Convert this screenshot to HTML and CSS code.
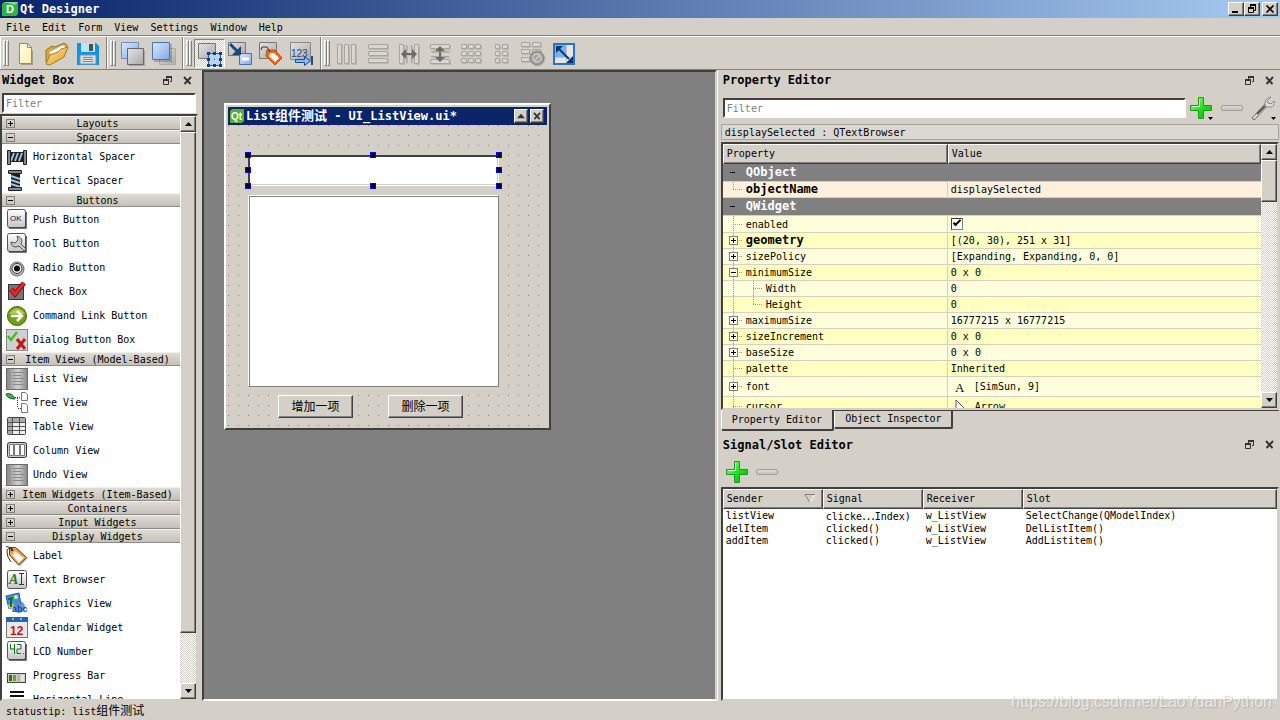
FILE: index.html
```html
<!doctype html>
<html lang="en">
<head>
	<meta charset="utf-8">
	<meta name="viewport" content="width=device-width, initial-scale=1">
	<title>Qt Designer</title>
	<link rel="stylesheet" href="styles.css">
</head>
<body>

	<!-- Shared shapes -->
	<svg class="defs" aria-hidden="true">
		<defs>
			<linearGradient id="g-blue" x1="0" y1="0" x2="1" y2="1"><stop offset="0" stop-color="#dbe9fb"/><stop offset="1" stop-color="#7fabe8"/></linearGradient>
			<linearGradient id="g-gray" x1="0" y1="0" x2="1" y2="1"><stop offset="0" stop-color="#e4e4e4"/><stop offset="1" stop-color="#a9a9a9"/></linearGradient>
			<linearGradient id="g-key" x1="0" y1="0" x2="0" y2="1"><stop offset="0" stop-color="#fff"/><stop offset="1" stop-color="#c4c4c4"/></linearGradient>
			<linearGradient id="g-green" x1="0" y1="0" x2="1" y2="1"><stop offset="0" stop-color="#9dff8a"/><stop offset=".55" stop-color="#1fdc1f"/><stop offset="1" stop-color="#08b008"/></linearGradient>
			<linearGradient id="g-list" x1="0" y1="0" x2="1" y2="0"><stop offset="0" stop-color="#858585"/><stop offset=".55" stop-color="#d2d2d2"/><stop offset="1" stop-color="#858585"/></linearGradient>
			<linearGradient id="g-folder" x1="0" y1="0" x2="1" y2="1"><stop offset="0" stop-color="#ffe99a"/><stop offset="1" stop-color="#d99a20"/></linearGradient>
			<linearGradient id="g-page" x1="0" y1="0" x2="1" y2="1"><stop offset="0" stop-color="#fffff0"/><stop offset="1" stop-color="#fdf0a0"/></linearGradient>
		</defs>
		<symbol id="float" viewBox="0 0 9 9"><path d="M3 1h6M0 4h6" stroke="currentColor" stroke-width="2"/><path d="M3.500 1v2M8.500 1v4.500H7M.5 4v4.500h5V4" fill="none" stroke="currentColor"/></symbol>
		<symbol id="close" viewBox="0 0 9 8"><path d="M1 .5l6.500 7M8 .5l-6.500 7" fill="none" stroke="currentColor" stroke-width="1.900"/></symbol>
		<symbol id="up" viewBox="0 0 7 4"><path d="M3.500 0L7 4H0z" fill="currentColor"/></symbol>
		<symbol id="down" viewBox="0 0 7 4"><path d="M0 0h7L3.500 4z" fill="currentColor"/></symbol>
		<symbol id="plus" viewBox="0 0 22 22"><path d="M8.500 .5h5v8h8v5h-8v8h-5v-8h-8v-5h8z" fill="url(#g-green)" stroke="#14a014"/><path d="M9.500 2v7.500H2" fill="none" stroke="#d4ffcc"/></symbol>
		<symbol id="minus" viewBox="0 0 22 6"><rect x=".5" y=".5" width="21" height="5" rx="1" fill="#c9c6c0" stroke="#a3a09b"/><path d="M2 2h18" stroke="#e4e2dd"/></symbol>
		<symbol id="tag" viewBox="0 0 24 24"><path d="M6 5l6-1 11 10-8 8L5 11z" opacity=".3"/><path d="M4.500 3.500h6l11 10-8 7.500-9-10z" fill="#f0a04c" stroke="#6e431a"/><path d="M10 7l9 7-5 5-7-8z" fill="#fff" stroke="#f7c27e"/><circle cx="7" cy="6" r="1.300" fill="#333"/><path d="M8 4L1 2.500M7 5Q2 3 2 8t4 10" fill="none" stroke="#333"/></symbol>
		<symbol id="list" viewBox="0 0 24 24"><rect x="1.500" y="1.500" width="21" height="21" fill="url(#g-list)" stroke="#6c6c6c"/><path d="M4 5.500h2M4 8.500h2M4 11.500h2M4 14.500h2M4 17.500h2M8 5.500h11M8 8.500h8M8 11.500h11M8 14.500h9M8 17.500h11" stroke="#888"/></symbol>
	</svg>

	<header class="titlebar">
		<svg class="logo" viewBox="0 0 16 14"><path d="M2 0h14v12l-2 2H0V2z" fill="#2fb344"/><path d="M2 0h14l-3 3z" fill="#7adf83"/><text x="4" y="11" class="logo-text">D</text></svg>
		<h1>Qt Designer</h1>
		<div class="window-buttons">
			<button class="raised" aria-label="Minimize"><svg viewBox="0 0 12 10"><path d="M2 8h6" stroke="#000" stroke-width="2"/></svg></button>
			<button class="raised" aria-label="Restore"><svg viewBox="0 0 12 10"><path d="M4.500 1v2M9.500 1v5.500H8M2.500 4v4.500h5V4" fill="none" stroke="#000"/><path d="M4 1h6M2 4h6" stroke="#000" stroke-width="2"/></svg></button>
			<button class="raised" aria-label="Close"><svg viewBox="0 0 12 10"><path d="M2.500 1.500l7 7M9.500 1.500l-7 7" stroke="#000" stroke-width="1.700"/></svg></button>
		</div>
	</header>

	<nav class="menubar">
		<button>File</button>
		<button>Edit</button>
		<button>Form</button>
		<button>View</button>
		<button>Settings</button>
		<button>Window</button>
		<button>Help</button>
	</nav>

	<div class="toolbar">
		<div class="tools">
			<i class="grip"></i>
			<button aria-label="New"><svg viewBox="0 0 24 24"><path d="M7 4h8l4 5v14H7z" opacity=".25"/><path d="M5.500 1.500h8l4 4v16h-12z" fill="url(#g-page)" stroke="#a08a50"/><path d="M13.500 1.500v4h4z" fill="#fff" stroke="#a08a50"/></svg></button>
			<button aria-label="Open"><svg viewBox="0 0 24 24"><path d="M1 8l6-4 3 1 9-4 3 2-1 7L8 21l-7-1z" fill="#d9a63c" stroke="#a36f16"/><path d="M4 10l14-7 3 2-4 9-9 4z" fill="#fff" stroke="#bbb"/><path d="M1 22l4-9 8-3 3-3 7-2-4 10L5 23z" fill="url(#g-folder)" stroke="#b07a1a"/></svg></button>
			<button aria-label="Save"><svg viewBox="0 0 24 24"><path d="M1 1h19l3 3v19H1z" fill="#0a93f0"/><path d="M5 1h14v9H5z" fill="#bfe3f2"/><path d="M13 2h4v7h-4z" fill="#4a4f55"/><path d="M4 13h16v9H4z" fill="#dcdcdc" stroke="#8f8f8f"/><path d="M7 15.500h10M7 17.500h10M7 19.500h10" stroke="#888"/></svg></button>
		</div>
		<div class="tools">
			<i class="grip"></i>
			<button aria-label="Send to back"><svg viewBox="0 0 24 24"><path d="M.5.500h17v16H.5z" fill="url(#g-blue)" stroke="#6b91c9"/><path d="M8 8h16v16H8z" opacity=".2"/><path d="M6.500 6.500h16v16h-16z" fill="url(#g-gray)" stroke="#686868"/></svg></button>
			<button aria-label="Bring to front"><svg viewBox="0 0 24 24"><path d="M7.500 6.500h16v16h-16z" fill="url(#g-gray)" stroke="#aaa"/><path d="M2 2h18v18H2z" opacity=".2"/><path d="M.5.500h17v17H.5z" fill="url(#g-blue)" stroke="#4776b8"/></svg></button>
		</div>
		<div class="tools">
			<i class="grip"></i>
			<button class="checked" aria-label="Edit widgets" aria-pressed="true"><svg viewBox="0 0 24 24"><path d="M.5.500h17v15H.5z" fill="url(#g-gray)" stroke="#777"/><path d="M10.500 10.500h12v12h-12z" fill="#b7d3f7" stroke="#2f62a8"/><path d="M9 9h3v3H9zM15 9h3v3h-3zM21 9h3v3h-3zM9 15h3v3H9zM21 15h3v3h-3zM9 21h3v3H9zM15 21h3v3h-3zM21 21h3v3h-3z" fill="#183c70"/><path d="M16 16h1v1h-1z" fill="#234e8c"/></svg></button>
			<button aria-label="Edit signals and slots"><svg viewBox="0 0 24 24"><path d="M.5.500h17v13H.5z" fill="url(#g-gray)" stroke="#777"/><path d="M11.500 11.500h12v11h-12z" fill="url(#g-blue)" stroke="#4673ad"/><path d="M14 17h7" stroke="#fff" stroke-width="3"/><path d="M2 2l8 8" stroke="#154a7a" stroke-width="3"/><path d="M13 4v9H4z" fill="#154a7a"/></svg></button>
			<button aria-label="Edit buddies"><svg viewBox="0 0 24 24"><path d="M.5.500h17v16H.5z" fill="url(#g-gray)" stroke="#777"/><path d="M8 8h8l7 8-7 7-9-9z" fill="#f26a17" stroke="#c14808"/><path d="M11 11h4l5 5-4 4-6-6z" fill="#fff"/><path d="M3 5h5l3 5M3 5l-1 3" stroke="#333" fill="none"/></svg></button>
			<button aria-label="Edit tab order"><svg viewBox="0 0 24 24"><path d="M.5.500h20v17H.5z" fill="url(#g-gray)" stroke="#888"/><text x="1" y="15" class="tab-text">123</text><path d="M5.500 17.500h9v-3l6 4.500-6 4.500v-3h-9z" fill="#8db9f1" stroke="#164d94"/><path d="M22 14v9" stroke="#164d94" stroke-width="2"/></svg></button>
		</div>
		<div class="tools">
			<i class="grip"></i>
			<button aria-label="Lay out horizontally"><svg class="flat" viewBox="0 0 24 24"><path d="M2.500 2.500h4v19h-4zM9.500 2.500h4v19h-4zM16.500 2.500h4v19h-4z"/></svg></button>
			<button aria-label="Lay out vertically"><svg class="flat" viewBox="0 0 24 24"><path d="M2.500 2.500h19v4h-19zM2.500 9.500h19v4h-19zM2.500 16.500h19v4h-19z"/></svg></button>
			<button aria-label="Lay out in a horizontal splitter"><svg class="flat" viewBox="0 0 24 24"><path d="M2.500 2.500h4v19h-4zM17.500 2.500h4v19h-4z"/><path d="M9.500 3v18M14.500 3v18"/><path d="M4 12l5-5v4h6V7l5 5-5 5v-4H9v4z" class="ink"/></svg></button>
			<button aria-label="Lay out in a vertical splitter"><svg class="flat" viewBox="0 0 24 24"><path d="M2.500 2.500h19v4h-19zM2.500 17.500h19v4h-19z"/><path d="M3 9.500h18M3 14.500h18"/><path d="M12 4l5 5h-4v6h4l-5 5-5-5h4V9H7z" class="ink"/></svg></button>
			<button aria-label="Lay out in a grid"><svg class="flat" viewBox="0 0 24 24"><path d="M2.500 2.500h5v4h-5zM9.500 2.500h5v4h-5zM16.500 2.500h5v4h-5zM2.500 9.500h5v4h-5zM9.500 9.500h5v4h-5zM16.500 9.500h5v4h-5zM2.500 16.500h5v4h-5zM9.500 16.500h5v4h-5zM16.500 16.500h5v4h-5z"/></svg></button>
			<button aria-label="Lay out in a form"><svg class="flat" viewBox="0 0 24 24"><path d="M5.500 2.500h4v4h-4zM12.500 2.500h5v4h-5zM5.500 9.500h4v4h-4zM12.500 9.500h5v4h-5zM5.500 16.500h4v4h-4zM12.500 16.500h5v4h-5z"/></svg></button>
			<button aria-label="Break layout"><svg class="flat" viewBox="0 0 24 24"><path d="M.5.500h8v4h-8zM11.500.500h8v4h-8zM.5 7.500h8v4h-8zM11.500 7.500h8v4h-8zM.5 15.500h8v4h-8z"/><circle cx="16" cy="16" r="7" class="ban"/><circle cx="16" cy="16" r="4" class="ring"/><path d="M13 19l6-6" class="ring"/></svg></button>
			<button aria-label="Adjust size"><svg viewBox="0 0 24 24"><path d="M2 2h20v20H2z" fill="#e7e6e4" stroke="#2a72c4" stroke-width="2"/><path d="M3 3h11v12H3z" fill="#79b3ee"/><path d="M14.500 3v18M3 15.500h18" stroke="#c3c3c3"/><path d="M7 7l10 10" stroke="#063a66" stroke-width="2"/><path d="M4 4h7l-7 7zM21 21h-7l7-7z" fill="#063a66"/></svg></button>
		</div>
	</div>

	<main class="workspace">

		<section class="dock widget-box">
			<header class="dock-title">
				<h2>Widget Box</h2>
				<button aria-label="Float"><svg><use href="#float"/></svg></button>
				<button aria-label="Close"><svg><use href="#close"/></svg></button>
			</header>
			<input class="filter" type="text" placeholder="Filter" aria-label="Filter widgets">

			<div class="sunken scroll-area">
				<div class="categories">
					<button class="category"><i class="box plus"></i><span>Layouts</span></button>
					<button class="category"><i class="box"></i><span>Spacers</span></button>
					<ul>
						<li><svg viewBox="0 0 24 24"><path d="M5 7h14v10H5z" fill="#1c1c1c"/><path d="M6 16l3-8M10 16l3-8M14 16l3-8" stroke="#9cc4e0" stroke-width="2"/><path d="M2.500 5.500h3v14h-3zM18.500 5.500h3v14h-3z" fill="#888" stroke="#222"/></svg>Horizontal Spacer</li>
						<li><svg viewBox="0 0 24 24"><path d="M6 4h9v15H6z" fill="#1c1c1c"/><path d="M6 7l9 3M6 11l9 3M6 15l9 3" stroke="#9cc4e0" stroke-width="2"/><path d="M3.500 1.500h13v3h-13zM3.500 18.500h13v3h-13z" fill="#888" stroke="#222"/></svg>Vertical Spacer</li>
					</ul>
					<button class="category"><i class="box"></i><span>Buttons</span></button>
					<ul>
						<li><svg viewBox="0 0 24 24"><rect x="2.500" y="1.500" width="18" height="18" rx="2" fill="url(#g-key)" stroke="#555"/><path d="M21 4v16H4" stroke="#444" fill="none" stroke-width="1.500"/><text x="5" y="13" class="ok-text">OK</text></svg>Push Button</li>
						<li><svg viewBox="0 0 24 24"><rect x="2.500" y="1.500" width="18" height="18" rx="2" fill="url(#g-key)" stroke="#555"/><path d="M21 4v16H4" stroke="#444" fill="none" stroke-width="1.500"/><path d="M12 4l1 4-3 3-4-1q0 5 5 5l3-1 5 5 2-2-5-5q3-6-4-8z" fill="#c8c8d4" stroke="#555"/></svg>Tool Button</li>
						<li><svg viewBox="0 0 24 24"><circle cx="12" cy="13" r="7" fill="#bbb" stroke="#666"/><circle cx="12" cy="12.500" r="5" fill="#eee" stroke="#333"/><circle cx="12" cy="12.500" r="3"/></svg>Radio Button</li>
						<li><svg viewBox="0 0 24 24"><rect x="3.500" y="4.500" width="15" height="15" fill="#777" stroke="#333"/><path d="M6 9l4 5L19 3" fill="none" stroke="#841010" stroke-width="5"/><path d="M6 9l4 5L19 3" fill="none" stroke="#e82424" stroke-width="3"/></svg>Check Box</li>
						<li><svg viewBox="0 0 24 24"><circle cx="12" cy="12" r="9.500" fill="#6fa114" stroke="#3f6408"/><path d="M4 10q8-11 16 0z" fill="#a9cd50"/><path d="M6 12h10M12 7l5 5-5 5" fill="none" stroke="#fff" stroke-width="2.500"/></svg>Command Link Button</li>
						<li><svg viewBox="0 0 24 24"><rect x="1.500" y="1.500" width="21" height="21" fill="#d0d0d0" stroke="#888"/><path d="M3 8l3 4 6-8" fill="none" stroke="#42c220" stroke-width="2.500"/><path d="M12 11l8 10M20 11l-8 10" stroke="#c21919" stroke-width="3"/></svg>Dialog Button Box</li>
					</ul>
					<button class="category"><i class="box"></i><span>Item Views (Model-Based)</span></button>
					<ul>
						<li><svg><use href="#list"/></svg>List View</li>
						<li><svg viewBox="0 0 24 24"><path d="M1 3q6-2 9 5-8 0-9-5z" fill="#3db54c" stroke="#0d5e1b"/><path d="M10 6.500h5M12.500 7v10M13 17.500h3" stroke="#333" stroke-dasharray="1 1"/><path d="M16.500 1.500h4l2 2v6h-6zM16.500 12.500h4l2 2v7h-6z" fill="#fff" stroke="#777"/></svg>Tree View</li>
						<li><svg viewBox="0 0 24 24"><rect x="2.500" y="2.500" width="18" height="17" rx="1" fill="#eee" stroke="#444"/><path d="M3 3h17v4H3zM3 3h4v16H3z" fill="#aaa"/><path d="M3 7.500h18M3 11.500h18M3 15.500h18M7.500 3v17M14.500 3v17" stroke="#555"/></svg>Table View</li>
						<li><svg viewBox="0 0 24 24"><rect x="2.500" y="3.500" width="19" height="15" rx="2" fill="#ccc" stroke="#333"/><path d="M4.500 5.500h4v11h-4zM9.500 5.500h5v11h-5zM15.500 5.500h4v11h-4z" fill="#fff" stroke="#777"/></svg>Column View</li>
						<li><svg><use href="#list"/></svg>Undo View</li>
					</ul>
					<button class="category"><i class="box plus"></i><span>Item Widgets (Item-Based)</span></button>
					<button class="category"><i class="box plus"></i><span>Containers</span></button>
					<button class="category"><i class="box plus"></i><span>Input Widgets</span></button>
					<button class="category"><i class="box"></i><span>Display Widgets</span></button>
					<ul>
						<li><svg><use href="#tag"/></svg>Label</li>
						<li><svg viewBox="0 0 24 24"><rect x="2.500" y="2.500" width="19" height="18" rx="2" fill="url(#g-key)" stroke="#555"/><text x="4" y="16" class="ai-text">A</text><path d="M14 5.500h5M14 16.500h5M16.500 6v10" stroke="#333"/></svg>Text Browser</li>
						<li><svg viewBox="0 0 24 24"><path d="M1 4l13-3 2 12-12 4z" fill="#3c92e6" stroke="#1c5aa8"/><path d="M3 13l12-3v4L4 17z" fill="#e0cc62"/><circle cx="11" cy="5" r="2" fill="#ffe94a"/><path d="M6 6v9M3 7l5-1" stroke="#186a20" stroke-width="2"/><circle cx="14" cy="15" r="6" fill="#3d7fd0" opacity=".8"/><text x="7" y="20" class="abc-text">abc</text></svg>Graphics View</li>
						<li><svg viewBox="0 0 24 24"><rect x="1.500" y="1.500" width="21" height="20" fill="#e8e8e8" stroke="#777"/><path d="M1 1h22v5H1z" fill="#1f65b0"/><path d="M7 3h2M15 3h2" stroke="#fff"/><text x="5" y="19" class="cal-text">12</text></svg>Calendar Widget</li>
						<li><svg viewBox="0 0 24 24"><rect x="2.500" y="1.500" width="18" height="18" rx="2" fill="url(#g-key)" stroke="#555"/><path d="M21 4v16H4" stroke="#444" fill="none" stroke-width="1.500"/><path d="M5.500 4v5h4M9.500 4v10M12 4.500h4v4.500h-4v4.500h4M18 13.500h1" fill="none" stroke="#1d6a1d"/></svg>LCD Number</li>
						<li><svg viewBox="0 0 24 24"><rect x="2.500" y="9.500" width="18" height="9" fill="#cfcfcf" stroke="#444"/><path d="M4 11h3v6H4z" fill="#3c6a14"/><path d="M8 11h3v6H8z" fill="#6f9a45"/><path d="M12 11h3v6h-3z" fill="#a7c08a"/><path d="M16 11h3v6h-3z" fill="#e2ead8"/></svg>Progress Bar</li>
						<li><svg viewBox="0 0 24 24"><path d="M5 4h14M5 8h14M5 12h14" stroke="#111" stroke-width="2"/></svg>Horizontal Line</li>
					</ul>
				</div>
				<div class="scrollbar">
					<button class="raised" aria-label="Scroll up"><svg><use href="#up"/></svg></button>
					<div class="raised thumb thumb-widgets"></div>
					<button class="raised end" aria-label="Scroll down"><svg><use href="#down"/></svg></button>
				</div>
			</div>
		</section>

		<section class="mdi">
			<div class="form-window">
				<header class="form-title">
					<svg class="qt" viewBox="0 0 14 14"><path d="M2 0h12v12l-2 2H0V2z" fill="#56b030"/><text x="1" y="11" class="qt-text">Qt</text></svg>
					<h2>List<span class="cjk-title">组件测试</span> - UI_ListView.ui*</h2>
					<button class="raised" aria-label="Shade"><svg><use href="#up"/></svg></button>
					<button class="raised" aria-label="Close"><svg><use href="#close"/></svg></button>
				</header>
				<div class="canvas">
					<div class="item text-browser">
						<i class="handle n w"></i><i class="handle n mid"></i><i class="handle n e"></i>
						<i class="handle w center"></i><i class="handle e center"></i>
						<i class="handle s w"></i><i class="handle s mid"></i><i class="handle s e"></i>
					</div>
					<div class="item list-view"></div>
					<button class="item raised add-item">增加一项</button>
					<button class="item raised del-item">删除一项</button>
				</div>
			</div>
		</section>

		<div class="right">

			<section class="dock property-editor">
				<header class="dock-title">
					<h2>Property Editor</h2>
					<button aria-label="Float"><svg><use href="#float"/></svg></button>
					<button aria-label="Close"><svg><use href="#close"/></svg></button>
				</header>
				<div class="filter-row">
					<input class="filter" type="text" placeholder="Filter" aria-label="Filter properties">
					<button class="icon-button" aria-label="Add dynamic property"><svg class="cross"><use href="#plus"/></svg><svg class="arrow"><use href="#down"/></svg></button>
					<button class="icon-button" aria-label="Remove dynamic property"><svg class="dash"><use href="#minus"/></svg></button>
					<button class="icon-button" aria-label="Configure"><svg class="wrench" viewBox="0 0 24 24"><path d="M3 22L16 8" stroke="#777" stroke-width="4" stroke-linecap="round"/><path d="M3 22L16 8" stroke="#ddd" stroke-width="2" stroke-linecap="round"/><path d="M6 18l8-8" stroke="#333" stroke-width="1.500"/><path d="M20 1l-4 4 1 2 3 1 3-3q1 5-3 6-6 1-6-4t6-6z" fill="#e2e2e2" stroke="#888"/></svg><svg class="arrow"><use href="#down"/></svg></button>
				</div>
				<p class="object-name">displaySelected : QTextBrowser</p>

				<div class="sunken scroll-area">
					<div class="table-clip">
						<table class="properties">
							<thead><tr><th>Property</th><th>Value</th></tr></thead>
							<tbody>
								<tr class="group"><td colspan="2"><div><i class="dash-mark"></i>QObject</div></td></tr>
								<tr class="peach"><td><div><i class="branch last"></i><b>objectName</b></div></td><td>displaySelected</td></tr>
								<tr class="group"><td colspan="2"><div><i class="dash-mark"></i>QWidget</div></td></tr>
								<tr class="tall"><td><div><i class="branch"></i>enabled</div></td><td><input type="checkbox" checked aria-label="enabled"></td></tr>
								<tr class="alt"><td><div><i class="branch"><i class="box plus"></i></i><b>geometry</b></div></td><td>[(20, 30), 251 x 31]</td></tr>
								<tr><td><div><i class="branch"><i class="box plus"></i></i>sizePolicy</div></td><td>[Expanding, Expanding, 0, 0]</td></tr>
								<tr class="alt"><td><div><i class="branch"><i class="box"></i></i>minimumSize</div></td><td>0 x 0</td></tr>
								<tr><td><div><i class="branch trunk"></i><i class="branch"></i>Width</div></td><td>0</td></tr>
								<tr class="alt"><td><div><i class="branch trunk"></i><i class="branch last"></i>Height</div></td><td>0</td></tr>
								<tr><td><div><i class="branch"><i class="box plus"></i></i>maximumSize</div></td><td>16777215 x 16777215</td></tr>
								<tr class="alt"><td><div><i class="branch"><i class="box plus"></i></i>sizeIncrement</div></td><td>0 x 0</td></tr>
								<tr><td><div><i class="branch"><i class="box plus"></i></i>baseSize</div></td><td>0 x 0</td></tr>
								<tr class="alt"><td><div><i class="branch"></i>palette</div></td><td>Inherited</td></tr>
								<tr class="big"><td><div><i class="branch"><i class="box plus"></i></i>font</div></td><td><div><span class="font-sample">A</span>[SimSun, 9]</div></td></tr>
								<tr class="alt big"><td><div><i class="branch"></i>cursor</div></td><td><div><svg class="pointer" viewBox="0 0 16 16"><path d="M5 1v13l3-3 2 4 2-1-2-4h4z" fill="#fff" stroke="#556"/></svg>Arrow</div></td></tr>
							</tbody>
						</table>
					</div>
					<div class="scrollbar">
						<button class="raised" aria-label="Scroll up"><svg><use href="#up"/></svg></button>
						<div class="raised thumb thumb-properties"></div>
						<button class="raised end" aria-label="Scroll down"><svg><use href="#down"/></svg></button>
					</div>
				</div>
				<div class="tabs">
					<button class="active">Property Editor</button>
					<button>Object Inspector</button>
				</div>
			</section>

			<section class="dock signal-editor">
				<header class="dock-title">
					<h2>Signal/Slot Editor</h2>
					<button aria-label="Float"><svg><use href="#float"/></svg></button>
					<button aria-label="Close"><svg><use href="#close"/></svg></button>
				</header>
				<div class="signal-tools">
					<button class="icon-button" aria-label="Add connection"><svg class="cross"><use href="#plus"/></svg></button>
					<button class="icon-button" aria-label="Remove connection"><svg class="dash"><use href="#minus"/></svg></button>
				</div>
				<div class="sunken signal-area">
					<table class="signals">
						<thead><tr><th>Sender<svg class="sort" viewBox="0 0 12 9"><path d="M11 .5L6 8.500" stroke="#fff"/><path d="M11 .5H1l5 8" fill="none" stroke="#808080"/></svg></th><th>Signal</th><th>Receiver</th><th>Slot</th></tr></thead>
						<tbody>
							<tr><td>listView</td><td>clicke<span class="wide">⋯</span>Index)</td><td>w_ListView</td><td>SelectChange(QModelIndex)</td></tr>
							<tr><td>delItem</td><td>clicked()</td><td>w_ListView</td><td>DelListItem()</td></tr>
							<tr><td>addItem</td><td>clicked()</td><td>w_ListView</td><td>AddListitem()</td></tr>
						</tbody>
					</table>
				</div>
			</section>

		</div>
	</main>

	<footer class="statusbar">statustip: list<span class="cjk">组件测试</span></footer>
	<div class="watermark">https://blog.csdn.net/LaoYuanPython</div>

</body>
</html>
```
FILE: styles.css
```css
:root
{
	--face: #d4d0c8;
	--shadow: #808080;
	--dark: #404040;
	--light: #fff;
	--navy: #0a246a;
}

*, *::before, *::after { box-sizing: border-box; }

body
{
	margin: 0;
	height: 100vh;
	display: flex;
	flex-direction: column;
	overflow: hidden;

	font: 10px/12px "DejaVu Sans Mono", "Noto Sans CJK SC", monospace;
	background: var(--face);
	color: #000;
}

button, input
{
	margin: 0;
	padding: 0;
	border: 0;
	background: none;
	font: inherit;
	color: inherit;
}

h1, h2, p, ul { margin: 0; padding: 0; }
h1, h2, b { font-size: 12px; font-weight: bold; }
ul { list-style: none; }
svg { display: block; flex: none; }

.defs { position: absolute; width: 0; height: 0; }
.cjk { font-size: 12px; }
.cjk-title { font-size: 13px; }
.wide { font: 12px/12px "Noto Sans CJK SC", sans-serif; }

/* -------- Bevels -------- */

.raised
{
	background: var(--face);
	border: 1px solid;
	border-color: var(--light) var(--dark) var(--dark) var(--light);
	box-shadow: inset -1px -1px var(--shadow);
}

.sunken
{
	border: 2px solid;
	border-color: var(--dark) var(--face) var(--face) var(--dark);
	background: #fff;
}

/* -------- Title and menu -------- */

.titlebar
{
	flex: none;
	height: 18px;
	display: flex;
	align-items: center;
	padding: 0 2px;
	background: linear-gradient(to right, var(--navy), #a6caf0);
	color: #fff;
}

.logo { width: 16px; height: 14px; margin-right: 2px; }
.logo-text { font: bold 11px "Liberation Sans", sans-serif; fill: #fff; }

.window-buttons { display: flex; margin-left: auto; }
.window-buttons button { width: 16px; height: 14px; padding: 1px; }
.window-buttons button:last-child { margin-left: 2px; }
.window-buttons svg { width: 12px; height: 10px; }

.menubar
{
	flex: none;
	height: 18px;
	display: flex;
	border-bottom: 1px solid var(--shadow);
}

.menubar button { padding: 2px 6px 0; }

/* -------- Toolbar -------- */

.toolbar
{
	flex: none;
	height: 34px;
	display: flex;
	border-top: 1px solid var(--light);
	border-bottom: 1px solid var(--shadow);
}

.tools
{
	display: flex;
	align-items: center;
	padding: 0 2px;
	border-left: 1px solid var(--light);
	border-right: 1px solid var(--shadow);
}

.tools:last-child { border-right: 0; }

.grip
{
	display: flex;
	width: 6px;
	height: 26px;
	margin-right: 2px;
}

.grip::before, .grip::after
{
	content: "";
	width: 3px;
	border: 1px solid;
	border-color: var(--light) var(--shadow) var(--shadow) var(--light);
}

.tools button { width: 31px; height: 29px; padding: 3px; }
.tools svg { width: 24px; height: 24px; }

.tools .checked
{
	border: 1px solid;
	border-color: var(--shadow) var(--light) var(--light) var(--shadow);
	background: repeating-conic-gradient(#fff 0 25%, var(--face) 0 50%) 0 0 / 2px 2px;
}

.tab-text { font: 10px "Liberation Sans", sans-serif; fill: #174a86; }
.flat { fill: #dad7d0; stroke: #a8a59e; filter: drop-shadow(1px 1px 0 #bbb8b1); }
.flat .ink { fill: #6c6b66; stroke: none; }
.flat .ban { fill: #9b9994; stroke: #888680; }
.flat .ring { fill: none; stroke: #c6c3bd; stroke-width: 2; }

/* -------- Docks -------- */

.workspace { flex: 1; min-height: 0; display: flex; }

.dock { display: flex; flex-direction: column; min-height: 0; min-width: 0; }

.dock-title
{
	flex: none;
	height: 20px;
	display: flex;
	align-items: center;
	gap: 11px;
	padding: 0 7px 0 2px;
}

.dock-title h2 { margin-right: auto; }
.dock-title button { color: #333; }
.dock-title svg { width: 9px; height: 9px; }

.filter
{
	height: 20px;
	min-width: 0;
	padding: 0 2px;
	border: 2px solid;
	border-color: var(--dark) var(--light) var(--light) var(--dark);
	background: #fff;
	border-radius: 0;
}

.filter::placeholder { color: #808080; opacity: 1; }

.widget-box { flex: none; width: 202px; padding-right: 4px; }
.widget-box .dock-title { padding-right: 6px; }
.widget-box .filter { flex: none; margin: 3px 2px 1px 2px; }

.scroll-area { flex: 1; min-height: 0; display: flex; overflow: hidden; }

.categories { flex: 1; min-width: 0; overflow: hidden; }

.category
{
	width: 100%;
	height: 14px;
	display: flex;
	align-items: center;
	padding: 0 0 0 4px;
	background: linear-gradient(#dedbd5, #c5c1b9);
	border-bottom: 1px solid #8d8b86;
	border-top: 1px solid #f2f0ec;
}

.category span { flex: 1; padding-top: 1px; text-align: center; white-space: nowrap; }

.categories ul { padding-top: 1px; }

.categories li
{
	height: 24px;
	display: flex;
	align-items: center;
	gap: 4px;
	padding-left: 3px;
}

.categories li svg { width: 24px; height: 24px; }

.ok-text { font: 8px "Liberation Sans", sans-serif; fill: #222; }
.ai-text { font: italic bold 14px "Liberation Serif", serif; fill: #1d7a2e; }
.abc-text { font: bold 9px "Liberation Sans", sans-serif; fill: #174a96; }
.cal-text { font: bold 12px "Liberation Sans", sans-serif; fill: #c41717; }

/* Expander squares */

.box
{
	flex: none;
	width: 9px;
	height: 9px;
	border: 1px solid var(--shadow);
	background: linear-gradient(#000, #000) center / 5px 1px no-repeat;
}

.box.plus
{
	background:
		linear-gradient(#000, #000) center / 5px 1px no-repeat,
		linear-gradient(#000, #000) center / 1px 5px no-repeat;
}

.scrollbar
{
	flex: none;
	width: 16px;
	display: flex;
	flex-direction: column;
	background: repeating-conic-gradient(#fff 0 25%, var(--face) 0 50%) 0 0 / 2px 2px;
}

.scrollbar button
{
	flex: none;
	height: 16px;
	display: grid;
	place-items: center;
}

.scrollbar svg { width: 7px; height: 4px; }
.scrollbar .end { margin-top: auto; }
.thumb { flex: none; }
.thumb-widgets { height: 86%; }
.thumb-properties { height: 16%; }

/* -------- Form window -------- */

.mdi
{
	flex: 1;
	position: relative;
	overflow: hidden;
	background: #808080;
	border: 2px solid;
	border-color: var(--dark) var(--face) var(--light) var(--dark);
}

.form-window
{
	position: absolute;
	left: 20px;
	top: 31px;
	padding: 2px;
	background: var(--face);
	border: 2px solid;
	border-color: var(--light) var(--dark) var(--dark) var(--light);
}

.form-title
{
	height: 18px;
	display: flex;
	align-items: center;
	gap: 2px;
	padding: 0 3px 0 2px;
	background: var(--navy);
	color: #fff;
}

.form-title h2 { margin-right: auto; white-space: nowrap; }
.form-title .qt { width: 14px; height: 14px; }
.qt-text { font: bold 10px "Liberation Sans", sans-serif; fill: #fff; }

.form-title button
{
	width: 14px;
	height: 14px;
	display: grid;
	place-items: center;
	color: #333;
}

.form-title button svg { width: 8px; height: 8px; }

/* Dot grid, one pixel every ten */
.canvas
{
	position: relative;
	width: 319px;
	height: 301px;
	background:
		linear-gradient(to right, transparent 1px, var(--face) 1px) 0 0 / 10px 10px,
		linear-gradient(var(--shadow) 1px, var(--face) 1px) 0 0 / 10px 10px;
}

.item { position: absolute; }

.text-browser
{
	left: 20px;
	top: 30px;
	width: 251px;
	height: 31px;
	background: #fff;
	border: solid;
	border-width: 2px 1px 1px 2px;
	border-color: var(--dark) var(--light) var(--light) var(--dark);
	box-shadow: inset -1px -1px var(--face);
}

.list-view
{
	left: 20px;
	top: 70px;
	width: 251px;
	height: 192px;
	background: #fff;
	border: 1px solid;
	border-color: var(--light) var(--shadow) var(--shadow) var(--light);
	box-shadow: inset 1px 1px var(--shadow);
}

.add-item, .del-item { top: 270px; width: 75px; height: 23px; font-size: 12px; }
.add-item { left: 50px; }
.del-item { left: 160px; }

.handle
{
	position: absolute;
	width: 6px;
	height: 6px;
	background: #000;
	border: 1px solid #00f;
}

.handle.n { top: -5px; }
.handle.s { bottom: -4px; }
.handle.w { left: -5px; }
.handle.e { right: -4px; }
.handle.mid { left: calc(50% - 4px); }
.handle.center { top: calc(50% - 4px); }

/* -------- Property editor -------- */

.right
{
	flex: none;
	width: 44%;
	display: flex;
	flex-direction: column;
	padding: 0 1px 0 3px;
	border-left: 1px solid var(--light);
}

.property-editor { flex: 43; }
.signal-editor { flex: 32; }
.right .dock-title { padding-right: 5px; }

.filter-row
{
	flex: none;
	height: 34px;
	display: flex;
	align-items: center;
	gap: 8px;
	padding: 2px 3px 0 2px;
}

.filter-row .filter { flex: 1; margin-right: -4px; }

.icon-button { display: flex; align-items: flex-end; height: 24px; }
.icon-button .arrow { width: 5px; height: 3px; margin-left: -4px; }
.icon-button .cross { width: 22px; height: 22px; margin-bottom: 1px; }
.icon-button .dash { width: 22px; height: 6px; margin-bottom: 9px; }
.icon-button .wrench { width: 24px; height: 24px; }

.object-name
{
	flex: none;
	height: 16px;
	padding: 2px 3px 0;
	border: 1px solid #a5a39e;
	background: #dbd8d1;
	margin-bottom: 2px;
}

.table-clip { flex: 1; min-width: 0; overflow: hidden; }

table
{
	width: 100%;
	table-layout: fixed;
	border-collapse: separate;
	border-spacing: 0;
}

th
{
	height: 20px;
	padding: 0 3px;
	font-weight: normal;
	text-align: left;
	background: var(--face);
	border: 1px solid;
	border-color: var(--light) var(--dark) var(--dark) var(--light);
	box-shadow: inset -1px -1px var(--shadow);
}

td { padding: 0 3px; white-space: nowrap; overflow: hidden; }

.properties th:first-child { width: 225px; }

.properties td
{
	height: 16px;
	line-height: 15px;
	background: #ffffdc;
	border-bottom: 1px solid var(--face);
}

.properties td:first-child { padding: 0; border-right: 1px solid var(--face); }
.properties td > div { display: flex; align-items: center; }
.properties td:first-child > div { height: 15px; }
.properties .alt td { background: #ffffbf; }
.properties .peach td { background: #fff0dc; }

.properties .tall td { height: 17px; }
.properties .tall td > div { height: 16px; }
.properties .big td { height: 20px; }
.properties .big td > div { height: 19px; }

.properties .group td
{
	height: 18px;
	background: #808080;
	color: #fff;
	font-size: 12px;
	font-weight: bold;
	border-right: 0;
}

.properties .group td > div { height: 17px; }

.dash-mark { width: 5px; height: 1px; margin: 0 11px 0 7px; background: #000; }

/* Dotted tree lines */
.branch
{
	flex: none;
	align-self: stretch;
	width: 20px;
	display: grid;
	align-items: center;
	padding-left: 6px;
	background:
		repeating-linear-gradient(#999 0 1px, transparent 1px 2px) 10px 0 / 1px 100% no-repeat,
		repeating-linear-gradient(to right, #999 0 1px, transparent 1px 2px) 10px 50% / 10px 1px no-repeat;
}

.branch:not(:has(+ .branch)) { margin-right: 3px; }

.branch.last
{
	background:
		repeating-linear-gradient(#999 0 1px, transparent 1px 2px) 10px 0 / 1px 50% no-repeat,
		repeating-linear-gradient(to right, #999 0 1px, transparent 1px 2px) 10px 50% / 10px 1px no-repeat;
}

.branch.trunk { background: repeating-linear-gradient(#999 0 1px, transparent 1px 2px) 10px 0 / 1px 100% no-repeat; }
.branch .box { background-color: #ffffdc; }

input[type="checkbox"]
{
	appearance: none;
	display: block;
	width: 12px;
	height: 12px;
	border: 1px solid;
	border-color: var(--dark) var(--shadow) var(--shadow) var(--dark);
	background: #fff;
}

input[type="checkbox"]:checked::before
{
	content: "";
	display: block;
	width: 8px;
	height: 4px;
	margin: 1px;
	border: solid #000;
	border-width: 0 0 2px 2px;
	transform: rotate(-45deg);
}

.font-sample { width: 14px; margin: 2px 7px 0 2px; font: 13px/14px "Liberation Serif", serif; text-align: center; }
.pointer { width: 16px; height: 16px; margin-right: 8px; }

.tabs
{
	flex: none;
	height: 22px;
	display: flex;
	align-items: flex-start;
	border-top: 1px solid var(--dark);
}

.tabs button
{
	height: 18px;
	padding: 0 10px;
	border: solid;
	border-width: 0 2px 2px 1px;
	border-color: var(--dark) var(--dark) var(--dark) var(--light);
	border-radius: 0 0 2px 2px;
}

.tabs .active { height: 21px; margin-top: -1px; padding-top: 2px; background: var(--face); }

/* -------- Signal/slot editor -------- */

.signal-tools
{
	flex: none;
	height: 29px;
	display: flex;
	align-items: center;
	gap: 8px;
	padding-left: 5px;
}

.signal-editor .dock-title { height: 26px; }
.signal-area { flex: 1; overflow: hidden; }
.signals th { width: 100px; }
.signals th:last-child { width: auto; }
.signals td { height: 12px; }
.sort { float: right; width: 12px; height: 9px; margin: 1px 3px 0 0; }

/* -------- Status bar -------- */

.statusbar
{
	flex: none;
	height: 19px;
	padding-left: 6px;
	line-height: 21px;
}

.watermark
{
	position: absolute;
	right: 8px;
	bottom: 8px;
	font: 16px/20px "Liberation Sans", sans-serif;
	color: rgba(255, 255, 255, .6);
	text-shadow: 1px 1px 1px rgba(120, 120, 120, .35);
}
```
